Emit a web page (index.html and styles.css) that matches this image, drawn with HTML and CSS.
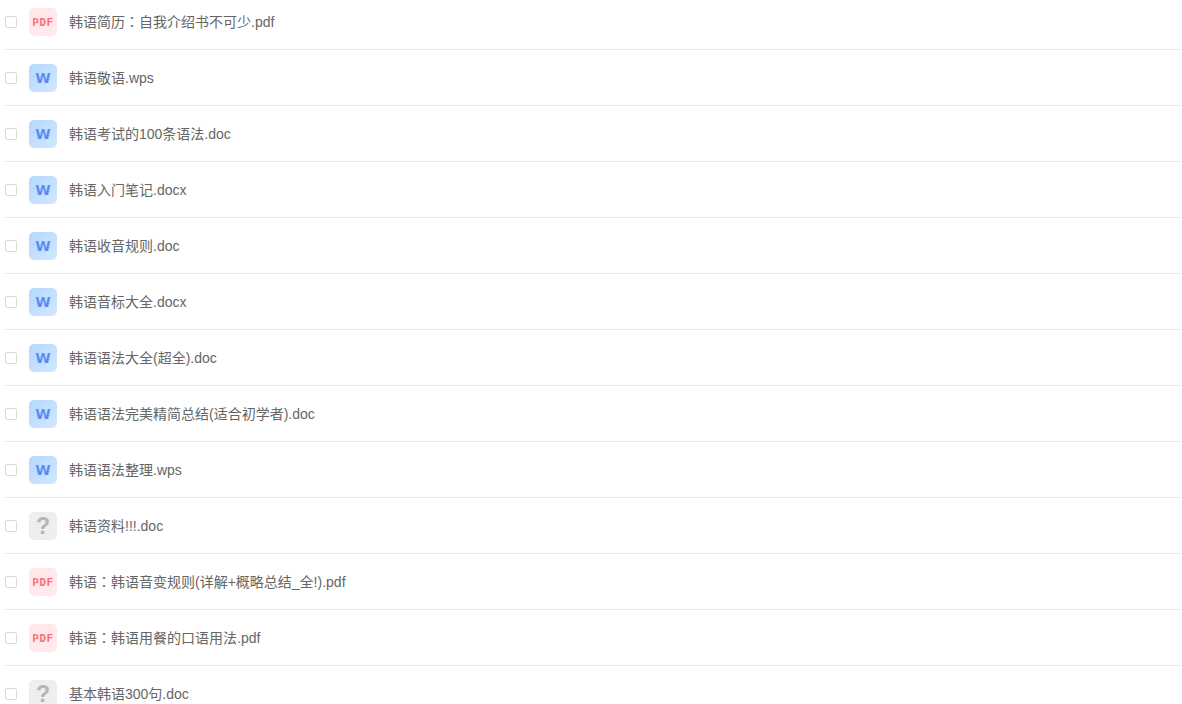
FILE: index.html
```html
<!DOCTYPE html>
<html lang="zh-CN">
<head>
<meta charset="UTF-8">
<meta name="viewport" content="width=device-width, initial-scale=1.0">
<title>韩语资料</title>
<link rel="stylesheet" href="styles.css">
</head>
<body>
<ul class="file-list">
  <li class="file-row"><span class="check"></span><span class="file-icon pdf">PDF</span><span class="file-name">韩语简历<span class="colon" lang="zh-TW">：</span>自我介绍书不可少.pdf</span></li>
  <li class="file-row"><span class="check"></span><span class="file-icon word">W</span><span class="file-name">韩语敬语.wps</span></li>
  <li class="file-row"><span class="check"></span><span class="file-icon word">W</span><span class="file-name">韩语考试的100条语法.doc</span></li>
  <li class="file-row"><span class="check"></span><span class="file-icon word">W</span><span class="file-name">韩语入门笔记.docx</span></li>
  <li class="file-row"><span class="check"></span><span class="file-icon word">W</span><span class="file-name">韩语收音规则.doc</span></li>
  <li class="file-row"><span class="check"></span><span class="file-icon word">W</span><span class="file-name">韩语音标大全.docx</span></li>
  <li class="file-row"><span class="check"></span><span class="file-icon word">W</span><span class="file-name">韩语语法大全(超全).doc</span></li>
  <li class="file-row"><span class="check"></span><span class="file-icon word">W</span><span class="file-name">韩语语法完美精简总结(适合初学者).doc</span></li>
  <li class="file-row"><span class="check"></span><span class="file-icon word">W</span><span class="file-name">韩语语法整理.wps</span></li>
  <li class="file-row"><span class="check"></span><span class="file-icon unknown">?</span><span class="file-name">韩语资料!!!.doc</span></li>
  <li class="file-row"><span class="check"></span><span class="file-icon pdf">PDF</span><span class="file-name">韩语<span class="colon" lang="zh-TW">：</span>韩语音变规则(详解+概略总结_全!).pdf</span></li>
  <li class="file-row"><span class="check"></span><span class="file-icon pdf">PDF</span><span class="file-name">韩语<span class="colon" lang="zh-TW">：</span>韩语用餐的口语用法.pdf</span></li>
  <li class="file-row"><span class="check"></span><span class="file-icon unknown">?</span><span class="file-name">基本韩语300句.doc</span></li>
</ul>
</body>
</html>
```

FILE: styles.css
```css
html, body {
  margin: 0;
  height: 100%;
  overflow: hidden;
  background-color: #fff;
}

body {
  font-family: "Liberation Sans", "Noto Sans CJK SC", sans-serif;
  font-size: 14px;
  color: #666;
}

.file-list {
  list-style: none;
  margin: -6px 1px 0 5px;
  padding: 0;
}

.file-row {
  display: flex;
  align-items: center;
  height: 55px;
  border-bottom: 1px solid #e8e8e8;
}

.check {
  box-sizing: border-box;
  width: 12px;
  height: 12px;
  border: 1px solid #d9d9d9;
  border-radius: 2px;
  margin-top: 1px;
  margin-right: 12px;
  flex-shrink: 0;
}

.file-icon {
  display: flex;
  align-items: center;
  justify-content: center;
  width: 28px;
  height: 28px;
  margin-top: 1px;
  margin-right: 12px;
  border-radius: 5px;
  flex-shrink: 0;
  font-weight: 700;
}

.pdf {
  background-color: #ffe9ea;
  color: #ff6f7d;
  font-family: "DejaVu Sans Mono", monospace;
  font-size: 11px;
  letter-spacing: 0.5px;
}

.word {
  background: linear-gradient(135deg, #b4d8fd, #d3e7fe);
  color: #5a8cf5;
  font-family: "DejaVu Sans", sans-serif;
  font-size: 14px;
}

.unknown {
  background-color: #eeeeee;
  color: #b5b5b5;
  font-family: "Liberation Sans", sans-serif;
  font-size: 23px;
}

.file-name {
  margin-bottom: 1px;
  white-space: nowrap;
}

/* centred full-width colon */
.colon {
  font-family: "Noto Sans CJK TC", sans-serif;
}
```
